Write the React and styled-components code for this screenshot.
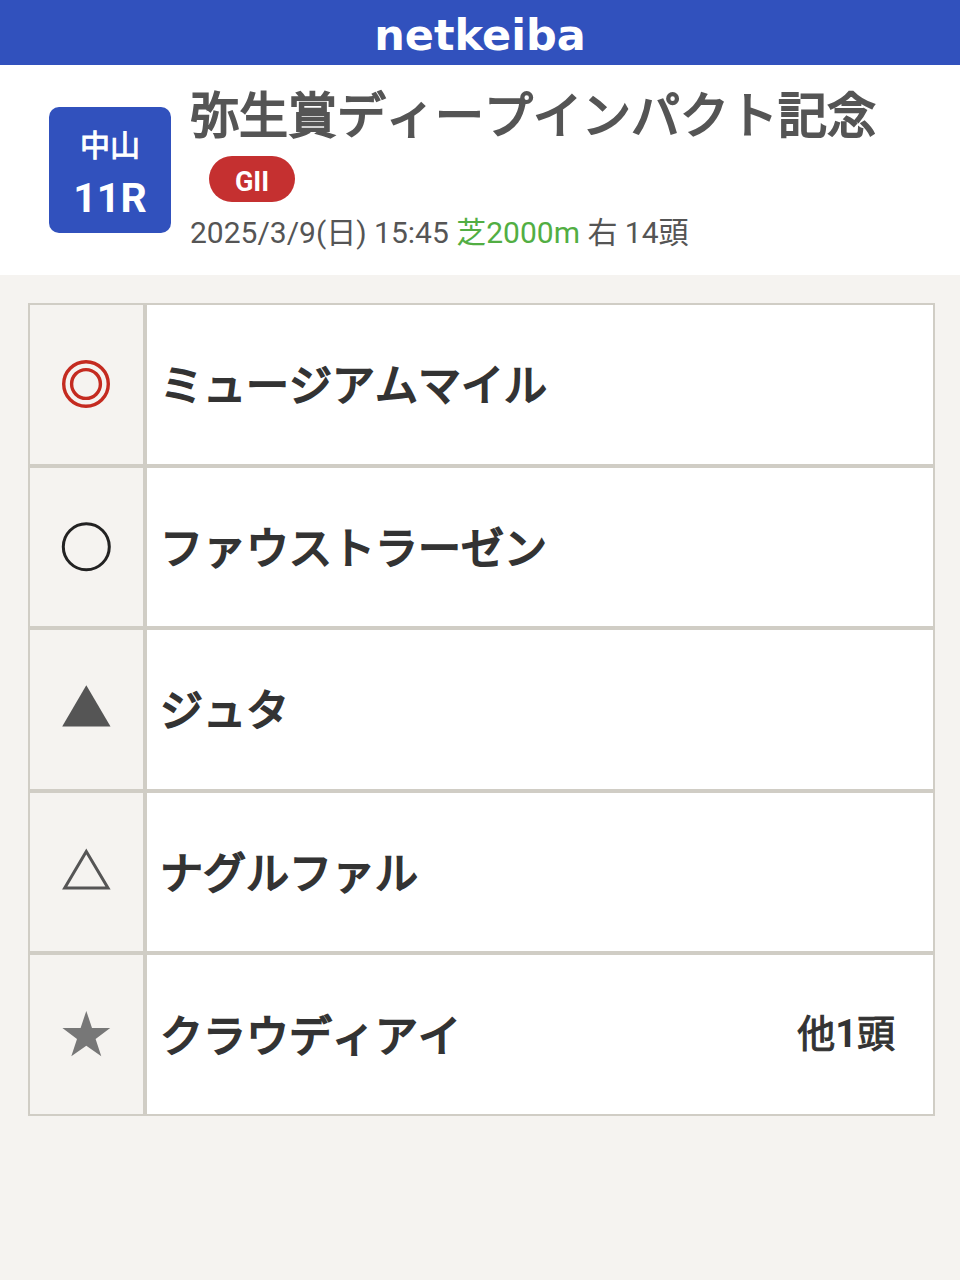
import styled, { createGlobalStyle } from "styled-components";

const GlobalStyle = createGlobalStyle`
  * {
    box-sizing: border-box;
  }
  body {
    margin: 0;
    background: #f5f3f0;
    color: #333;
    font-family: Roboto, "Noto Sans CJK JP", sans-serif;
  }
`;

const SiteHeader = styled.header`
  display: flex;
  align-items: center;
  justify-content: center;
  height: 65px;
  padding-top: 4px;
  background: #3151bd;
`;

const Logo = styled.a`
  color: #fff;
  font-family: "DejaVu Sans", sans-serif;
  font-size: 43px;
  font-weight: 700;
  line-height: 60px;
  text-decoration: none;
`;

const RaceHeader = styled.section`
  display: flex;
  align-items: center;
  gap: 19px;
  min-height: 210px;
  padding: 16px 48px 16px 49px;
  background: #fff;
`;

const RaceNumber = styled.div`
  display: flex;
  flex-direction: column;
  align-items: center;
  justify-content: center;
  flex: none;
  width: 122px;
  height: 126px;
  padding-top: 8px;
  border-radius: 10px;
  background: #3151bd;
  color: #fff;
  font-weight: 700;
`;

/* regular kanji and kana thickened by an outline, lighter than the bold cut */
const Thick = styled.span`
  font-weight: 400;
  font-kerning: none;
  -webkit-text-stroke: ${(props) => props.$stroke || 1}px currentColor;
`;

const Course = styled(Thick)`
  font-size: 30px;
  line-height: 48px;
`;

const Round = styled.span`
  font-size: 41px;
  line-height: 56px;
`;

const RaceInfo = styled.div`
  flex: 1;
  color: #555;
`;

const RaceName = styled.h1`
  margin: 0;
  font-size: 49px;
  font-weight: 700;
  line-height: 68px;
`;

const Grade = styled.span`
  display: block;
  width: 86px;
  height: 46px;
  margin: 5px 19px 7px;
  padding-top: 4px;
  border-radius: 23px;
  background: #c53030;
  color: #fff;
  font-size: 27px;
  font-weight: 700;
  line-height: 44px;
  text-align: center;
`;

const RaceData = styled.p`
  margin: 0;
  font-size: 30px;
  line-height: 48px;
`;

const Turf = styled.span`
  color: #52ae43;
`;

const Main = styled.main`
  padding: 28px 25px 28px 28px;
`;

const MarkTable = styled.table`
  width: 100%;
  height: 813px;
  border-collapse: separate;
  border-spacing: 0;
`;

const MarkCell = styled.th`
  width: 117px;
  padding: 0;
  border: 2px solid #d0cdc5;
  text-align: center;

  svg {
    display: block;
    margin: 0 auto;
  }
`;

const HorseCell = styled.td`
  padding: 4px 38px 0 13px;
  border: 2px solid #d0cdc5;
  background: #fff;
`;

const HorseRow = styled.div`
  display: flex;
  align-items: flex-start;
  justify-content: space-between;
`;

const HorseName = styled(Thick)`
  font-size: 43px;
  line-height: 64px;
`;

const Others = styled(Thick)`
  font-size: 38px;
  line-height: 58px;

  b {
    -webkit-text-stroke: 0;
  }
`;

const marks = {
  honmei: {
    label: "◎",
    shape: (
      <g fill="none" stroke="#c42b20" strokeWidth="3.4">
        <circle cx="25" cy="25" r="22.3" />
        <circle cx="25" cy="25" r="14.4" />
      </g>
    ),
  },
  taikou: {
    label: "○",
    shape: <circle cx="25.3" cy="25.7" r="23" fill="none" stroke="#222" strokeWidth="3" />,
  },
  tanana: {
    label: "▲",
    shape: <path d="M25.3 1.2 49.5 42.5H1.2Z" fill="#555" />,
  },
  renshita: {
    label: "△",
    shape: <path d="M25.3 4.4 47 41.1H3.7Z" fill="none" stroke="#555" strokeWidth="3" />,
  },
  hoshi: {
    label: "★",
    shape: (
      <path
        d="M25.3 1.9 31 18.9H49.2L34.6 29.9 40.3 47.2 25.3 36.7 10.3 47.2 16 29.9 1.4 18.9H19.6Z"
        fill="#777"
      />
    ),
  },
};

const Mark = ({ type }) => (
  <svg width="51" height="51" viewBox="0 0 51 51" role="img" aria-label={marks[type].label}>
    {marks[type].shape}
  </svg>
);

const horses = [
  { mark: "honmei", name: "ミュージアムマイル" },
  { mark: "taikou", name: "ファウストラーゼン" },
  { mark: "tanana", name: "ジュタ" },
  { mark: "renshita", name: "ナグルファル" },
  { mark: "hoshi", name: "クラウディアイ", others: 1 },
];

const App = () => {
  return (
    <>
      <GlobalStyle />
      <SiteHeader>
        <Logo href="/">netkeiba</Logo>
      </SiteHeader>
      <RaceHeader>
        <RaceNumber>
          <Course>中山</Course>
          <Round>11R</Round>
        </RaceNumber>
        <RaceInfo>
          <RaceName>
            <Thick $stroke={2}>弥生賞ディープインパクト記念</Thick>
          </RaceName>
          <Grade>GII</Grade>
          <RaceData>
            2025/3/9(日) 15:45 <Turf>芝2000m</Turf> 右 14頭
          </RaceData>
        </RaceInfo>
      </RaceHeader>
      <Main>
        <MarkTable>
          <tbody>
            {horses.map((horse) => (
              <tr key={horse.name}>
                <MarkCell scope="row">
                  <Mark type={horse.mark} />
                </MarkCell>
                <HorseCell>
                  <HorseRow>
                    <HorseName $stroke={2}>{horse.name}</HorseName>
                    {horse.others && (
                      <Others>
                        他<b>{horse.others}</b>頭
                      </Others>
                    )}
                  </HorseRow>
                </HorseCell>
              </tr>
            ))}
          </tbody>
        </MarkTable>
      </Main>
    </>
  );
};

export default App;
